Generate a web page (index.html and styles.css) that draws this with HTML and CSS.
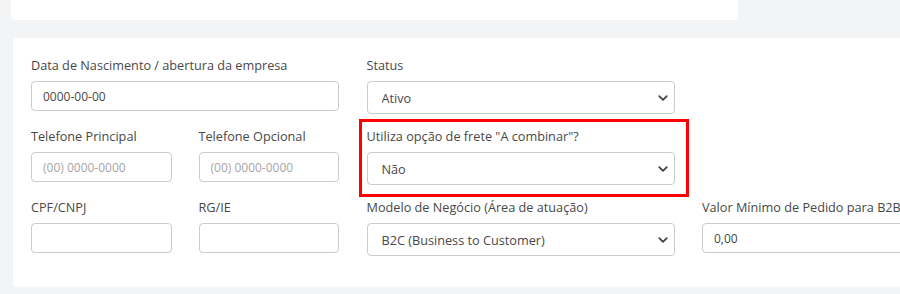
FILE: index.html
```html
<!DOCTYPE html>
<html lang="pt-BR">
<head>
  <meta charset="UTF-8" />
  <title>Cadastro</title>
  <link rel="stylesheet" href="styles.css">
</head>
<body>
  <div class="card card-top"></div>

  <div class="card card-form">
    <div class="form-grid">
      <div class="field">
        <label>Data de Nascimento / abertura da empresa</label>
        <input type="text" value="0000-00-00" />
      </div>
      <div class="field">
        <label>Status</label>
        <select><option>Ativo</option></select>
      </div>
      <div class="field"></div>

      <div class="pair">
        <div class="field">
          <label>Telefone Principal</label>
          <input type="text" placeholder="(00) 0000-0000" />
        </div>
        <div class="field">
          <label>Telefone Opcional</label>
          <input type="text" placeholder="(00) 0000-0000" />
        </div>
      </div>
      <div class="field highlighted">
        <label>Utiliza opção de frete "A combinar"?</label>
        <select><option>Não</option></select>
        <span class="mark"></span>
      </div>
      <div class="field"></div>

      <div class="pair">
        <div class="field">
          <label>CPF/CNPJ</label>
          <input type="text" />
        </div>
        <div class="field">
          <label>RG/IE</label>
          <input type="text" />
        </div>
      </div>
      <div class="field">
        <label>Modelo de Negócio (Área de atuação)</label>
        <select><option>B2C (Business to Customer)</option></select>
      </div>
      <div class="field">
        <label>Valor Mínimo de Pedido para B2B</label>
        <input type="text" value="0,00" />
      </div>
    </div>
  </div>
</body>
</html>
```

FILE: styles.css
```css
body {
  margin: 0;
  padding: 0;
  background: #f3f4f6;
  font-family: 'Open Sans', sans-serif;
  color: #484848;
  overflow: hidden;
}

.card {
  background: #fff;
  border-radius: 4px;
}

.card-top {
  margin-left: 11px;
  width: 727px;
  height: 20px;
  border-radius: 0 0 4px 4px;
}

.card-form {
  margin-top: 18px;
  margin-left: 13px;
  width: 1000px;
  height: 249px;
  box-sizing: border-box;
  padding: 18px 0 0 18px;
}

.form-grid {
  display: grid;
  grid-template-columns: 308px 308px 308px;
  column-gap: 27.5px;
  row-gap: 13px;
}

.pair {
  display: grid;
  grid-template-columns: 1fr 1fr;
  column-gap: 27px;
}

.field {
  display: flex;
  flex-direction: column;
  position: relative;
  min-width: 0;
}

.field label {
  font-size: 12.7px;
  line-height: 18px;
  height: 18px;
  margin-bottom: 7px;
  color: #484848;
  white-space: nowrap;
}

.field input {
  width: 100%;
  height: 30px;
  box-sizing: border-box;
  border: 1px solid #ccc;
  border-radius: 4px;
  padding: 0 11px;
  font-family: inherit;
  font-size: 12px;
  color: #484848;
  background: #fff;
}

.field input::placeholder {
  color: #a6a6a6;
}

.field select {
  width: 100%;
  height: 33px;
  box-sizing: border-box;
  border: 1px solid #ccc;
  border-radius: 4px;
  padding: 0 30px 0 14px;
  font-family: inherit;
  font-size: 12.7px;
  color: #484848;
  appearance: none;
  background: #fff url("data:image/svg+xml,%3csvg xmlns='http://www.w3.org/2000/svg' viewBox='0 0 16 16'%3e%3cpath fill='none' stroke='%23444' stroke-linecap='round' stroke-linejoin='round' stroke-width='2.4' d='M3 5.5l5 5 5-5'/%3e%3c/svg%3e") no-repeat right 5px center / 12px 12px;
}

.mark {
  position: absolute;
  top: -8px;
  left: -8px;
  right: -14px;
  bottom: -12px;
  border: 3px solid #f00;
  pointer-events: none;
}
```
